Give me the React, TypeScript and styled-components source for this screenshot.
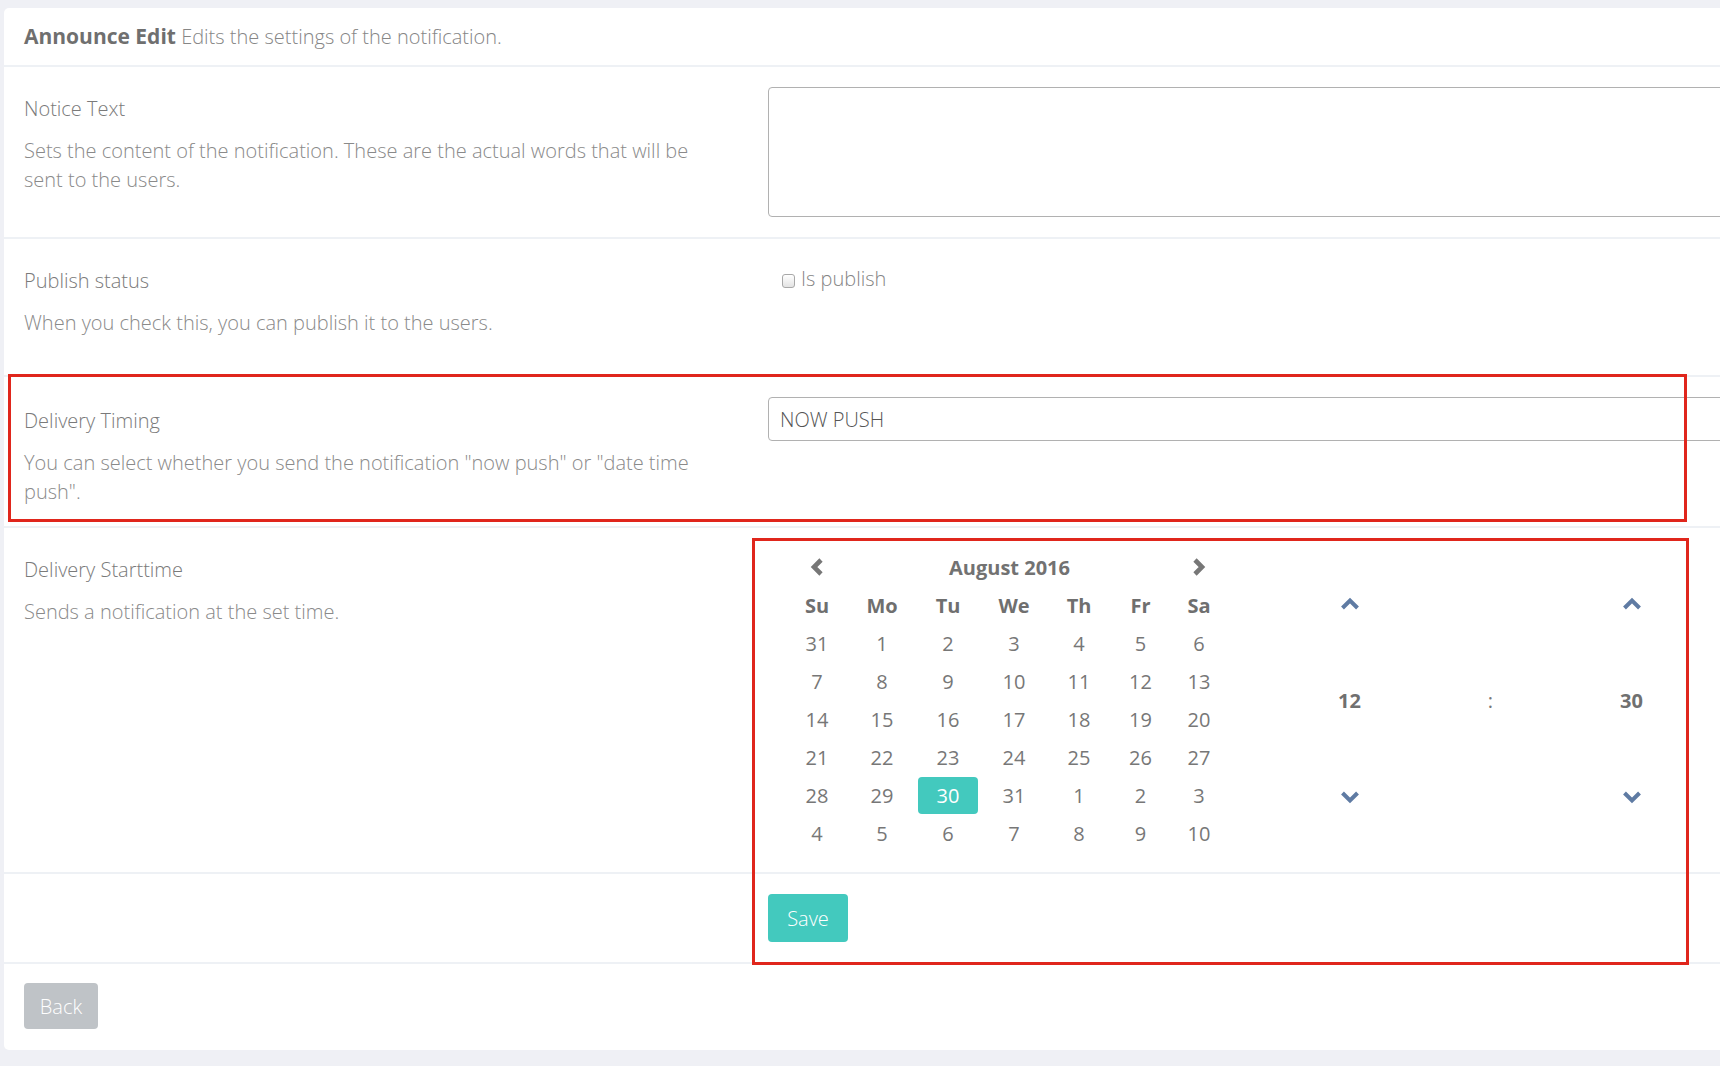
import React from 'react'
import styled, { createGlobalStyle } from 'styled-components'

const GlobalStyle = createGlobalStyle`
  html, body {
    margin: 0;
    padding: 0;
    background: #eff0f5;
    overflow: hidden;
  }
  body {
    font-family: 'Open Sans', 'Noto Sans', sans-serif;
  }
`

const Page = styled.div`
  padding: 8px 0 15px 4px;
  width: 1716px;
  overflow: hidden;
`

const Card = styled.div`
  width: 1800px;
  background: #fff;
  border-radius: 5px;
`

const Header = styled.div`
  padding: 16px 20px;
  line-height: 25px;
  font-size: 20px;
  color: #868686;
  font-weight: 300;
  border-bottom: 2px solid #eef1f5;
`

const HeaderTitle = styled.strong`
  font-size: 21px;
  font-weight: 700;
  color: #6f6f6f;
`

const Row = styled.div<{ $minHeight?: number }>`
  position: relative;
  display: grid;
  grid-template-columns: 764px 1fr;
  border-bottom: 2px solid #eef1f5;
  min-height: ${(p) => (p.$minHeight ? `${p.$minHeight}px` : 'auto')};
`

const LeftCell = styled.div<{ $top?: number }>`
  padding: ${(p) => p.$top ?? 20}px 20px 20px;
`

const RightCell = styled.div`
  padding: 20px 0;
`

const Label = styled.div`
  margin-top: 8px;
  font-size: 20px;
  line-height: 28px;
  font-weight: 300;
  color: #7a7a7a;
`

const Desc = styled.p`
  margin: 13px 0 0;
  max-width: 690px;
  font-size: 20px;
  line-height: 29px;
  font-weight: 300;
  color: #8a8a8a;
`

const TextArea = styled.div`
  height: 128px;
  border: 1.5px solid #b1b1b1;
  border-radius: 4px;
`

const Select = styled.div`
  height: 42px;
  border: 1.5px solid #b1b1b1;
  border-radius: 4px;
  display: flex;
  align-items: center;
  padding-left: 11px;
  font-size: 20px;
  font-weight: 300;
  color: #555;
`

const CheckLine = styled.label`
  display: flex;
  align-items: center;
  gap: 6px;
  margin: 6px 0 0 14px;
  font-size: 20px;
  line-height: 28px;
  font-weight: 300;
  color: #858585;
`

const CheckBox = styled.span`
  width: 11px;
  height: 12px;
  margin-top: 3px;
  border: 1px solid #a8a8a8;
  border-radius: 3px;
  background: linear-gradient(#ffffff, #e3e3e3);
`

const Highlight = styled.div<{ $left: number; $top: number; $width: number; $height: number }>`
  position: absolute;
  left: ${(p) => p.$left}px;
  top: ${(p) => p.$top}px;
  width: ${(p) => p.$width}px;
  height: ${(p) => p.$height}px;
  border: 3px solid #e0261c;
  box-sizing: border-box;
  pointer-events: none;
`

const Group = styled.div`
  position: relative;
`

const Picker = styled.div`
  display: flex;
`

const Calendar = styled.div`
  width: 443px;
  padding-left: 17px;
  display: grid;
  grid-template-columns: 64px 66px 66px 66px 64px 59px 58px;
  grid-auto-rows: 38px;
  align-items: center;
  justify-items: center;
  color: #777;
  font-size: 20px;
`

const NavButton = styled.span`
  display: flex;
  align-items: center;
  justify-content: center;
  color: #777;
`

const MonthTitle = styled.div`
  grid-column: 2 / span 5;
  font-weight: 700;
  color: #727272;
`

const DayName = styled.div`
  font-weight: 700;
  color: #6f6f6f;
`

const Day = styled.div<{ $active?: boolean }>`
  justify-self: stretch;
  margin: 0 ${(p) => (p.$active ? '3px' : '0')};
  height: 37px;
  border-radius: 4px;
  display: flex;
  align-items: center;
  justify-content: center;
  background: ${(p) => (p.$active ? '#43c9be' : 'transparent')};
  color: ${(p) => (p.$active ? '#fff' : '#777')};
`

const TimePicker = styled.div`
  margin-left: 51px;
  align-self: center;
  display: grid;
  grid-template-columns: 141px 141px 141px;
  grid-auto-rows: 97px;
  align-items: center;
  justify-items: center;
`

const TimeValue = styled.div`
  font-size: 20px;
  font-weight: 700;
  color: #707070;
`

const Colon = styled.div`
  font-size: 20px;
  color: #777;
`

const TimeArrow = styled.span`
  display: flex;
  color: #5f7ba3;
`

const Button = styled.button<{ $variant: 'save' | 'back' }>`
  border: none;
  border-radius: 4px;
  font-family: 'Open Sans', 'Noto Sans', sans-serif;
  font-size: 20px;
  font-weight: 300;
  color: #fff;
  padding: 0;
  background: ${(p) => (p.$variant === 'save' ? '#43c9be' : '#bfc3c7')};
  width: ${(p) => (p.$variant === 'save' ? 80 : 74)}px;
  height: ${(p) => (p.$variant === 'save' ? 48 : 46)}px;
`

const Footer = styled.div`
  padding: 19px 20px 21px;
`

const ChevronLeft = () => (
  <svg width="16" height="20" viewBox="0 0 16 20">
    <polyline points="12,3 5,10 12,17" fill="none" stroke="currentColor" strokeWidth="4.6" />
  </svg>
)

const ChevronRight = () => (
  <svg width="16" height="20" viewBox="0 0 16 20">
    <polyline points="4,3 11,10 4,17" fill="none" stroke="currentColor" strokeWidth="4.6" />
  </svg>
)

const ChevronUp = () => (
  <svg width="20" height="13" viewBox="0 0 20 13">
    <polyline points="2.5,11 10,3.5 17.5,11" fill="none" stroke="currentColor" strokeWidth="4" />
  </svg>
)

const ChevronDown = () => (
  <svg width="20" height="13" viewBox="0 0 20 13">
    <polyline points="2.5,2 10,9.5 17.5,2" fill="none" stroke="currentColor" strokeWidth="4" />
  </svg>
)

const dayNames = ['Su', 'Mo', 'Tu', 'We', 'Th', 'Fr', 'Sa']
const days = [
  31, 1, 2, 3, 4, 5, 6,
  7, 8, 9, 10, 11, 12, 13,
  14, 15, 16, 17, 18, 19, 20,
  21, 22, 23, 24, 25, 26, 27,
  28, 29, 30, 31, 1, 2, 3,
  4, 5, 6, 7, 8, 9, 10,
]

const App = () => {
  return (
    <Page>
      <GlobalStyle />
      <Card>
        <Header>
          <HeaderTitle>Announce Edit</HeaderTitle> Edits the settings of the notification.
        </Header>

        <Row>
          <LeftCell>
            <Label>Notice Text</Label>
            <Desc>
              Sets the content of the notification. These are the actual words that will be
              sent to the users.
            </Desc>
          </LeftCell>
          <RightCell>
            <TextArea />
          </RightCell>
        </Row>

        <Row $minHeight={136}>
          <LeftCell>
            <Label>Publish status</Label>
            <Desc>When you check this, you can publish it to the users.</Desc>
          </LeftCell>
          <RightCell>
            <CheckLine>
              <CheckBox />
              Is publish
            </CheckLine>
          </RightCell>
        </Row>

        <Row>
          <LeftCell $top={22}>
            <Label>Delivery Timing</Label>
            <Desc>
              You can select whether you send the notification "now push" or "date time
              push".
            </Desc>
          </LeftCell>
          <RightCell>
            <Select>NOW PUSH</Select>
          </RightCell>
          <Highlight $left={4} $top={-3} $width={1679} $height={148} />
        </Row>

        <Group>
          <Row>
            <LeftCell>
              <Label>Delivery Starttime</Label>
              <Desc>Sends a notification at the set time.</Desc>
            </LeftCell>
            <RightCell>
              <Picker>
                <Calendar>
                  <NavButton>
                    <ChevronLeft />
                  </NavButton>
                  <MonthTitle>August 2016</MonthTitle>
                  <NavButton>
                    <ChevronRight />
                  </NavButton>
                  {dayNames.map((d) => (
                    <DayName key={d}>{d}</DayName>
                  ))}
                  {days.map((d, i) => (
                    <Day key={i} $active={i === 30}>
                      {d}
                    </Day>
                  ))}
                </Calendar>
                <TimePicker>
                  <TimeArrow>
                    <ChevronUp />
                  </TimeArrow>
                  <span />
                  <TimeArrow>
                    <ChevronUp />
                  </TimeArrow>
                  <TimeValue>12</TimeValue>
                  <Colon>:</Colon>
                  <TimeValue>30</TimeValue>
                  <TimeArrow>
                    <ChevronDown />
                  </TimeArrow>
                  <span />
                  <TimeArrow>
                    <ChevronDown />
                  </TimeArrow>
                </TimePicker>
              </Picker>
            </RightCell>
          </Row>
          <Row>
            <LeftCell />
            <RightCell>
              <Button $variant="save">Save</Button>
            </RightCell>
          </Row>
          <Highlight $left={748} $top={10} $width={937} $height={427} />
        </Group>

        <Footer>
          <Button $variant="back">Back</Button>
        </Footer>
      </Card>
    </Page>
  )
}

export default App
